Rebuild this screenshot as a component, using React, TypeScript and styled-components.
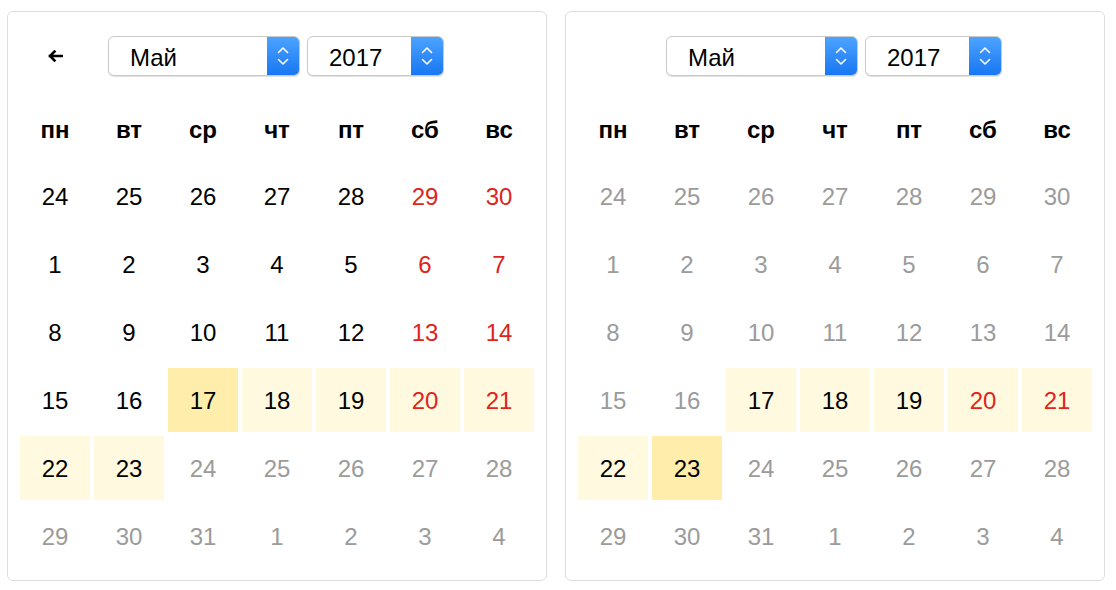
import styled, { createGlobalStyle } from "styled-components";

const GlobalStyle = createGlobalStyle`
  html, body {
    margin: 0;
    padding: 0;
    background: #fff;
  }
  body {
    font-family: "Liberation Sans", Helvetica, Arial, sans-serif;
    color: #000;
  }
`;

const WEEKDAYS = ["пн", "вт", "ср", "чт", "пт", "сб", "вс"];

// April 24 .. June 4, 2017, six rows of a week each
const LABELS = [
  24, 25, 26, 27, 28, 29, 30,
  1, 2, 3, 4, 5, 6, 7,
  8, 9, 10, 11, 12, 13, 14,
  15, 16, 17, 18, 19, 20, 21,
  22, 23, 24, 25, 26, 27, 28,
  29, 30, 31, 1, 2, 3, 4,
];

const RANGE_START = 23;
const RANGE_END = 29;

type Range = "none" | "in" | "edge";

type PanelProps = {
  side: "from" | "to";
};

function ArrowLeft() {
  return (
    <svg width="16" height="12" viewBox="0 0 16 12">
      <path
        d="M15 6H3M7.5 1.5L3 6l4.5 4.5"
        fill="none"
        stroke="#000"
        strokeWidth="2.6"
        strokeLinecap="square"
        strokeLinejoin="miter"
      />
    </svg>
  );
}

function Chevrons() {
  return (
    <svg width="12" height="26" viewBox="0 0 12 26">
      <path
        d="M1.5 9.5L6 5l4.5 4.5M1.5 16.5L6 21l4.5-4.5"
        fill="none"
        stroke="#fff"
        strokeWidth="1.6"
        strokeLinecap="round"
        strokeLinejoin="round"
      />
    </svg>
  );
}

function Select({ value, width }: { value: string; width: number }) {
  return (
    <SelectBox $width={width}>
      <SelectValue>{value}</SelectValue>
      <SelectButton>
        <Chevrons />
      </SelectButton>
    </SelectBox>
  );
}

function Panel({ side }: PanelProps) {
  const edge = side === "from" ? RANGE_START : RANGE_END;

  return (
    <Card>
      <Header>
        <NavSlot>{side === "from" && <ArrowLeft />}</NavSlot>
        <Select value="Май" width={192} />
        <Select value="2017" width={137} />
      </Header>
      <Grid>
        {WEEKDAYS.map((w) => (
          <WeekdayCell key={w}>{w}</WeekdayCell>
        ))}
        {LABELS.map((label, i) => {
          const muted =
            i > RANGE_END || (side === "to" && i < RANGE_START);
          const weekend = i % 7 >= 5;
          let range: Range = "none";
          if (i >= RANGE_START && i <= RANGE_END) range = "in";
          if (i === edge) range = "edge";
          return (
            <DayCell key={i} $muted={muted} $weekend={weekend} $range={range}>
              {label}
            </DayCell>
          );
        })}
      </Grid>
    </Card>
  );
}

export default function App() {
  return (
    <>
      <GlobalStyle />
      <Page>
        <Panel side="from" />
        <Panel side="to" />
      </Page>
    </>
  );
}

const Page = styled.div`
  display: flex;
  gap: 18px;
  padding: 11px 0 0 7px;
`;

const Card = styled.div`
  width: 514px;
  padding: 12px;
  border: 1px solid #dcdcdc;
  border-radius: 6px;
  background: #fff;
`;

const Header = styled.div`
  display: flex;
  align-items: center;
  gap: 7px;
  height: 40px;
  padding-top: 12px;
  margin-bottom: 20px;
`;

const NavSlot = styled.div`
  width: 70px;
  height: 40px;
  margin-right: 11px;
  display: flex;
  align-items: center;
  justify-content: center;
`;

const SelectBox = styled.div<{ $width: number }>`
  box-sizing: border-box;
  width: ${(p) => p.$width}px;
  height: 40px;
  display: flex;
  border: 1px solid #c9c9c9;
  border-radius: 6px;
  background: #fff;
  box-shadow: 0 1px 1px rgba(0, 0, 0, 0.12);
  overflow: hidden;
`;

const SelectValue = styled.div`
  flex: 1;
  padding: 2px 0 0 21px;
  font-size: 24px;
  line-height: 38px;
  color: #000;
`;

const SelectButton = styled.div`
  width: 32px;
  display: flex;
  align-items: center;
  justify-content: center;
  background: linear-gradient(#4ca3ff, #1877f2);
`;

const Grid = styled.div`
  display: grid;
  grid-template-columns: repeat(7, 70px);
  grid-auto-rows: 64px;
  gap: 4px;
`;

const WeekdayCell = styled.div`
  display: flex;
  align-items: center;
  justify-content: center;
  padding-top: 4px;
  font-size: 24px;
  font-weight: bold;
`;

const DayCell = styled.div<{ $muted: boolean; $weekend: boolean; $range: Range }>`
  display: flex;
  align-items: center;
  justify-content: center;
  padding-top: 1px;
  font-size: 24px;
  color: ${(p) => (p.$muted ? "#9b9b9b" : p.$weekend ? "#e0231c" : "#000")};
  background: ${(p) =>
    p.$range === "edge" ? "#ffeeab" : p.$range === "in" ? "#fff9e0" : "transparent"};
`;
